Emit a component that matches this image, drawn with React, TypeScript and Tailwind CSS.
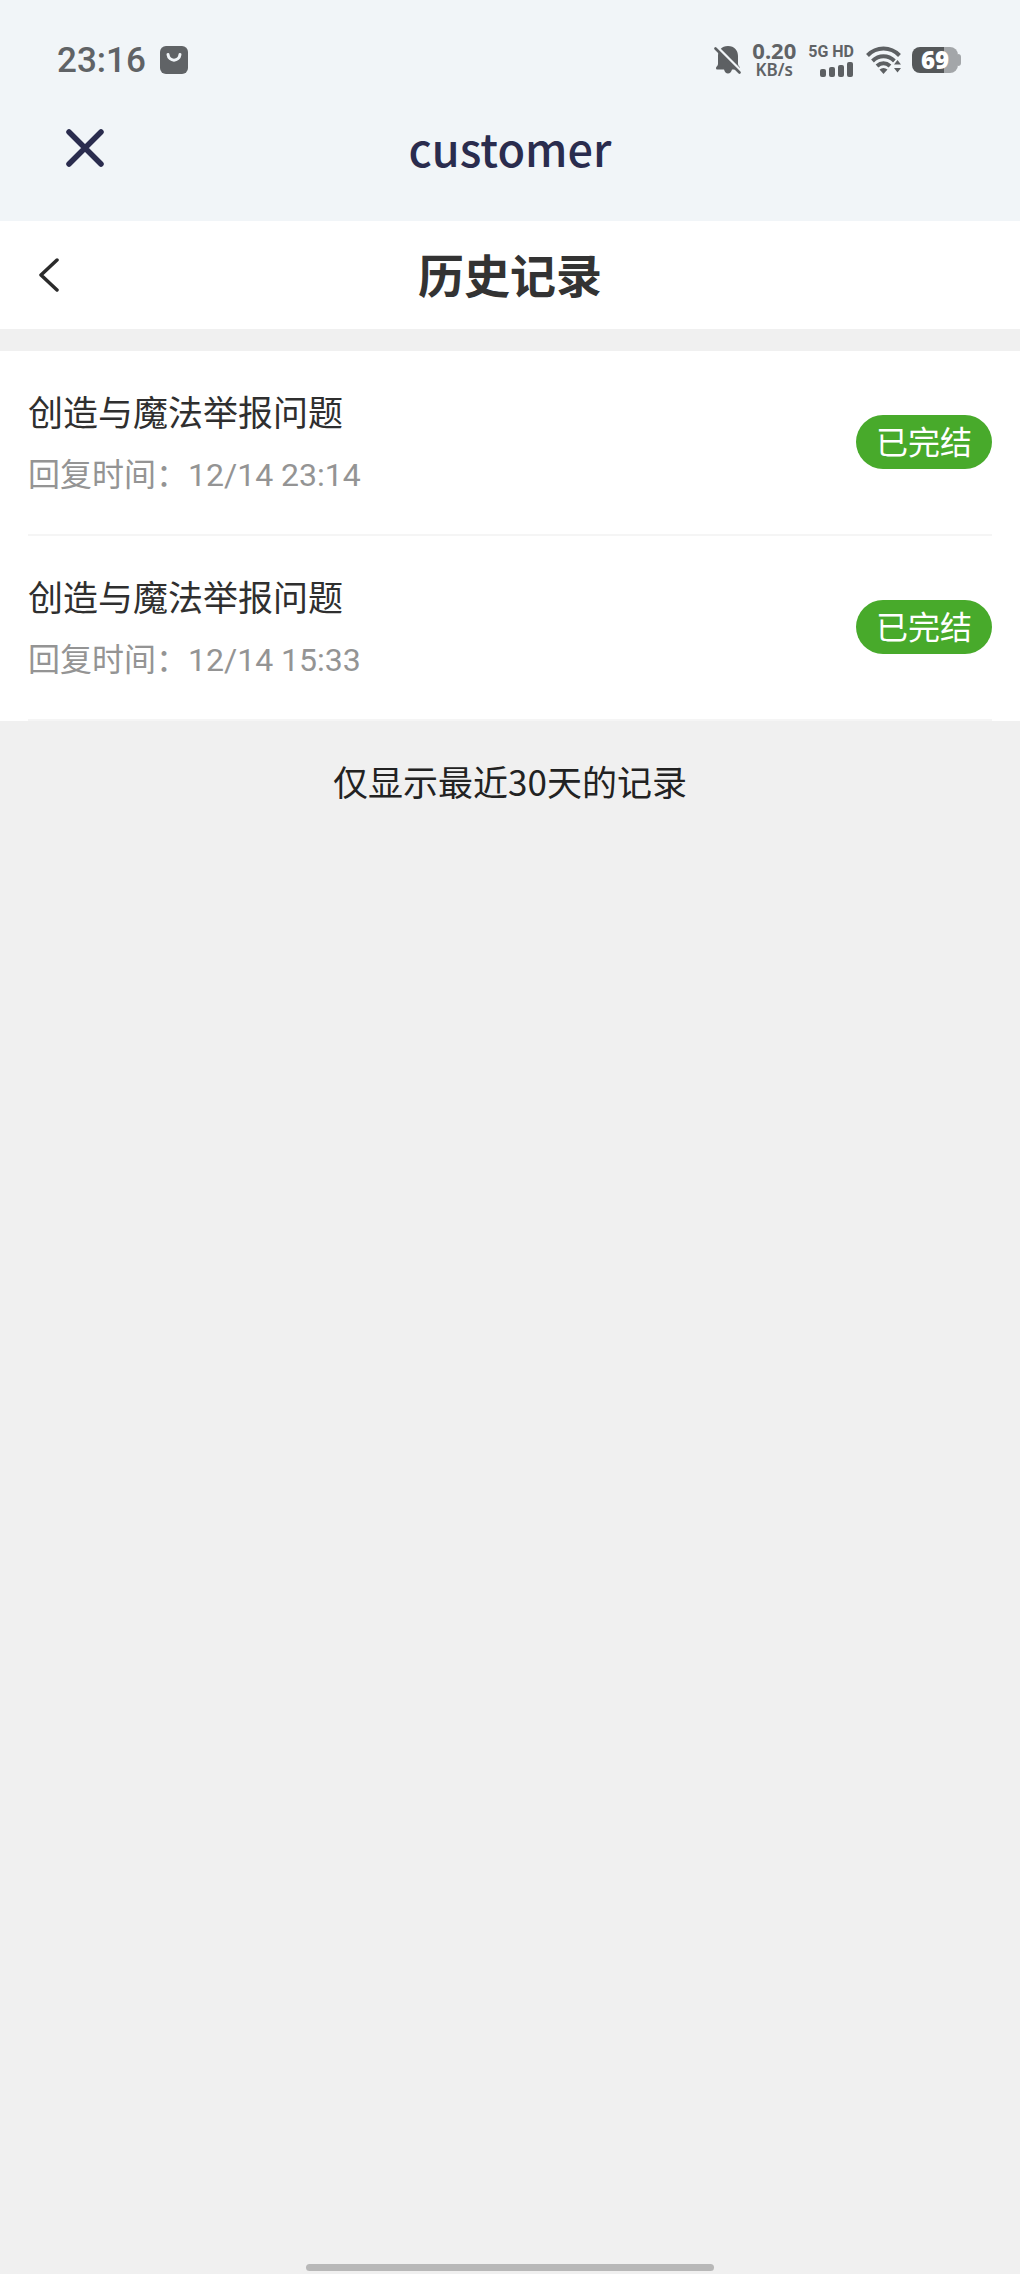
type RecordItem = { title: string; time: string; status: string };

const records: RecordItem[] = [
  { title: '创造与魔法举报问题', time: '12/14 23:14', status: '已完结' },
  { title: '创造与魔法举报问题', time: '12/14 15:33', status: '已完结' },
];

function BagIcon() {
  return (
    <svg width="30" height="30" viewBox="0 0 30 30" aria-hidden="true">
      <rect x="1" y="1" width="28" height="28" rx="6" fill="#606366" />
      <path d="M9 9.5c1 7.5 11 7.5 12 0" fill="none" stroke="#f1f5f8" strokeWidth="3" strokeLinecap="round" />
    </svg>
  );
}

function MutedBellIcon() {
  return (
    <svg width="28" height="32" viewBox="0 0 28 32" aria-hidden="true">
      <path
        d="M14 2C7.5 2 4 6.5 4 12v8c0 2-2 2.500-2 4 0 1 .5 1.500 1.500 1.500H10c.8 2.500 2 4 4 4s3.200-1.500 4-4h6.500c1 0 1.500-.5 1.500-1.500 0-1.500-2-2-2-4v-8C24 6.500 20.500 2 14 2z"
        fill="#5d6063"
      />
      <path d="M2.500 2.500L28 28" stroke="#f1f5f8" strokeWidth="3" />
      <path d="M1.500 4.500L25.500 28.500" stroke="#5d6063" strokeWidth="2.600" strokeLinecap="round" />
    </svg>
  );
}

function SignalIcon() {
  return (
    <svg width="34" height="15" viewBox="0 0 34 15" aria-hidden="true" fill="#5d6063">
      <rect x="0" y="7" width="6" height="8" rx="2" />
      <rect x="9" y="5" width="6" height="10" rx="2" />
      <rect x="18" y="3" width="6" height="12" rx="2" />
      <rect x="27" y="0" width="6" height="15" rx="2" />
    </svg>
  );
}

function WifiIcon() {
  return (
    <svg width="36" height="30" viewBox="0 0 36 30" aria-hidden="true">
      <g fill="none" stroke="#5d6063" strokeWidth="4">
        <path d="M1.500 10.500C10.500 1.200 24.500 1.200 33.500 10.500" />
        <path d="M6.500 16c6.500-6.200 15.500-6.200 22 0" />
        <path d="M11 21c4-3.600 9-3.600 13 0" />
      </g>
      <path d="M13.500 24.500c2.500-2 5.500-2 8 0l-4 4.500z" fill="#5d6063" />
      <path d="M27 18L31.500 12.500 36 18V24L31.500 29.500 27 24z" fill="#f1f5f8" />
      <path d="M28 19.500l3.500-4.500 3.500 4.500zM28 23l3.500 4.500L35 23z" fill="#5d6063" />
    </svg>
  );
}

function Battery() {
  return (
    <div className="flex items-center" role="img" aria-label="69%">
      <div className="flex h-[26px] w-[46px] items-center justify-center rounded-lg bg-[linear-gradient(to_right,#55585a_70%,#a3a6a9_70%)] font-['Open_Sans',sans-serif] text-[24px] leading-none font-extrabold text-white">
        69
      </div>
      <div className="h-3 w-[3px] rounded-r-full bg-[#a3a6a9]" />
    </div>
  );
}

function StatusBar() {
  return (
    <div className="flex h-10 items-center justify-between pr-[59px] pl-[57px] text-[#606366]">
      <div className="flex items-center gap-[13px]">
        <span className="font-[Roboto,sans-serif] text-[35px] leading-none font-medium">23:16</span>
        <BagIcon />
      </div>
      <div className="flex items-center">
        <MutedBellIcon />
        <div className="ml-2.5 flex flex-col items-center font-['Noto_Sans',sans-serif]">
          <span className="text-[22px] leading-[19px] font-bold">0.20</span>
          <span className="text-[17px] leading-[19px] font-semibold">KB/s</span>
        </div>
        <div className="ml-3 flex flex-col items-end gap-0.5">
          <span className="font-[Roboto,sans-serif] text-[16px] leading-4 font-bold">5G HD</span>
          <SignalIcon />
        </div>
        <div className="mr-2.5 ml-3">
          <WifiIcon />
        </div>
        <Battery />
      </div>
    </div>
  );
}

function RecordRow({ title, time, status }: RecordItem) {
  return (
    <li className="flex items-center justify-between border-b-2 border-[#f5f5f5] pt-9 pb-[38px]">
      <div className="flex flex-col gap-[13px]">
        <h2 className="h-12 text-[35px] leading-[48px] text-[#2f2f2f]">{title}</h2>
        <p className="h-12 text-[32px] leading-[48px] text-[#949494]">
          回复时间：<span className="font-[Roboto,sans-serif]">{time}</span>
        </p>
      </div>
      <span className="rounded-full bg-[#48aa2b] px-5 pb-1 text-[32px] leading-[50px] text-white">{status}</span>
    </li>
  );
}

export default function App() {
  return (
    <div className="flex min-h-screen flex-col bg-[#f0f0f0] font-['Noto_Sans_CJK_SC',sans-serif]" lang="zh-CN">
      <header className="bg-[#f1f5f8] pt-10 pb-[25px]">
        <StatusBar />
        <div className="mt-5 grid h-24 grid-cols-[1fr_auto_1fr] items-center px-[60px]">
          <button type="button" aria-label="关闭" className="flex size-[50px] items-center justify-center">
            <svg width="38" height="38" viewBox="0 0 38 38" aria-hidden="true">
              <path d="M3 3L35 35M35 3L3 35" stroke="#2a2c4e" strokeWidth="5.500" strokeLinecap="round" />
            </svg>
          </button>
          <span className="text-[45px] leading-[70px] font-medium text-[#2a2c4e]">customer</span>
        </div>
      </header>
      <main className="flex flex-col">
        <div className="mb-[22px] grid h-[108px] grid-cols-[1fr_auto_1fr] items-center bg-white px-6">
          <button type="button" aria-label="返回" className="flex size-[50px] items-center justify-center">
            <svg width="20" height="34" viewBox="0 0 20 34" aria-hidden="true">
              <path
                d="M18 2L2 17L18 32"
                fill="none"
                stroke="#2b2b2b"
                strokeWidth="3.500"
                strokeLinecap="round"
                strokeLinejoin="round"
              />
            </svg>
          </button>
          <h1 className="pb-1 text-[46px] leading-[66px] font-bold text-[#333333]">历史记录</h1>
        </div>
        <ul className="bg-white px-7">
          {records.map((r) => (
            <RecordRow key={r.time} {...r} />
          ))}
        </ul>
        <p className="pt-[35px] text-center text-[35px] leading-[50px] text-[#222222]">仅显示最近30天的记录</p>
      </main>
      <div className="mx-auto mt-auto mb-[3px] h-[7px] w-2/5 rounded-full bg-[#b8b8b8]" />
    </div>
  );
}
